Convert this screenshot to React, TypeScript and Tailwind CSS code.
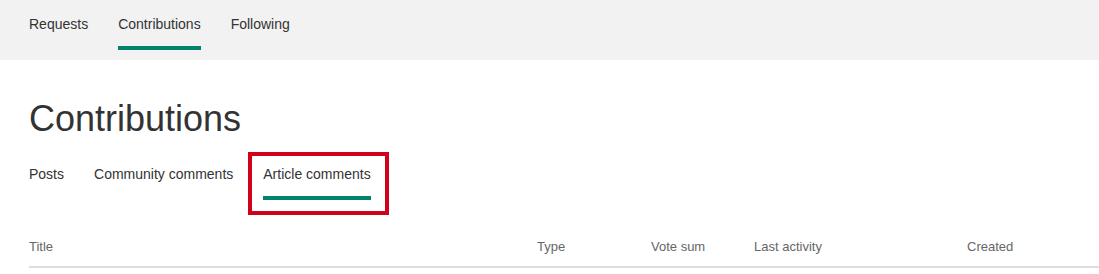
import { useState } from "react";

const topTabs = ["Requests", "Contributions", "Following"];
const subTabs = ["Posts", "Community comments", "Article comments"];
const columns = ["Title", "Type", "Vote sum", "Last activity", "Created"];

function Tab({
  label,
  active,
  onClick,
}: {
  label: string;
  active: boolean;
  onClick: () => void;
}) {
  return (
    <button
      className="flex flex-col items-stretch text-left cursor-pointer"
      onClick={onClick}
    >
      <span className="text-[14px] leading-5 text-[#333]">{label}</span>
      <span
        className={
          active ? "mt-3 h-1 bg-[#00826b]" : "mt-3 h-1 bg-transparent"
        }
      />
    </button>
  );
}

export default function App() {
  const [topTab, setTopTab] = useState("Contributions");
  const [subTab, setSubTab] = useState("Article comments");

  return (
    <div className="w-[1099px] h-[274px] overflow-hidden bg-white font-['Arial','Liberation_Sans',sans-serif]">
      <nav className="h-[60px] bg-[#f2f2f2] pl-[29px] pt-[14px] flex gap-[30px]">
        {topTabs.map((t) => (
          <Tab
            key={t}
            label={t}
            active={t === topTab}
            onClick={() => setTopTab(t)}
          />
        ))}
      </nav>

      <main className="pl-[29px]">
        <h1 className="mt-[39px] text-[36px] leading-[40px] text-[#333]">
          Contributions
        </h1>

        <div className="mt-[25px] flex gap-[30px]">
          {subTabs.map((t) => (
            <div key={t} className="relative flex">
              <Tab
                label={t}
                active={t === subTab}
                onClick={() => setSubTab(t)}
              />
              {t === "Article comments" && (
                <div className="absolute left-[-15px] top-[-12px] w-[141px] h-[63px] border-4 border-[#d0021b] pointer-events-none" />
              )}
            </div>
          ))}
        </div>

        <div className="mt-[39px] grid grid-cols-[508px_114px_103px_213px_1fr] border-b-2 border-[#ddd] pb-[11px]">
          {columns.map((c) => (
            <span key={c} className="text-[13px] leading-4 text-[#666]">
              {c}
            </span>
          ))}
        </div>
      </main>
    </div>
  );
}
